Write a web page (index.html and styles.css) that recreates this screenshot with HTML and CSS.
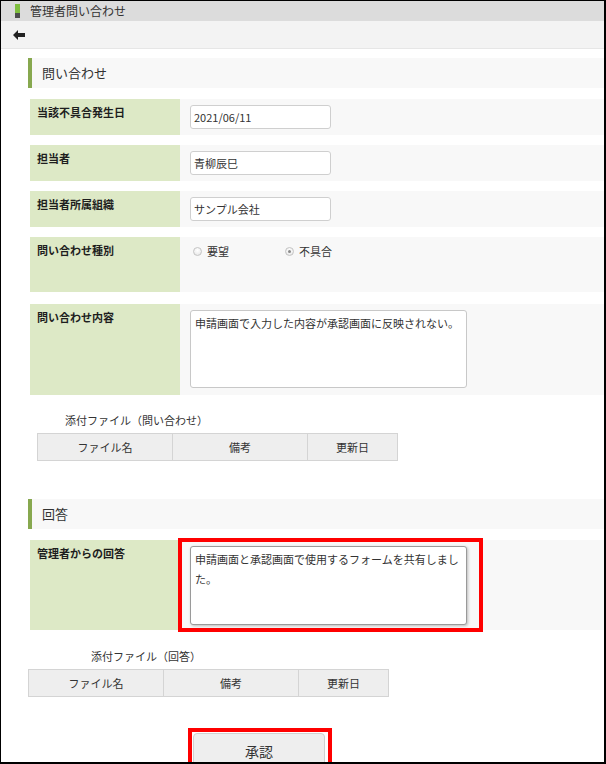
FILE: index.html
```html
<!DOCTYPE html>
<html lang="ja">
<head>
<meta charset="utf-8">
<title>管理者問い合わせ</title>
<link rel="stylesheet" href="styles.css">
</head>
<body>
<div class="frame">
  <div class="titlebar"><span class="marker"></span><span class="title">管理者問い合わせ</span></div>
  <div class="toolbar">
    <svg class="back" width="12" height="10" viewBox="0 0 12 10"><path d="M0 5 L5 0 L5 3 L12 3 L12 7 L5 7 L5 10 Z" fill="#222"/></svg>
  </div>
  <div class="content">
    <div class="section-head">問い合わせ</div>

    <div class="form-row r1">
      <div class="label">当該不具合発生日</div>
      <div class="value"><div class="input">2021/06/11</div></div>
    </div>
    <div class="form-row r1">
      <div class="label">担当者</div>
      <div class="value"><div class="input">青柳辰巳</div></div>
    </div>
    <div class="form-row r1">
      <div class="label">担当者所属組織</div>
      <div class="value"><div class="input">サンプル会社</div></div>
    </div>
    <div class="form-row r4">
      <div class="label">問い合わせ種別</div>
      <div class="value radios">
        <span class="radio-item w1"><span class="radio"></span>要望</span>
        <span class="radio-item"><span class="radio checked"></span>不具合</span>
      </div>
    </div>
    <div class="form-row r5">
      <div class="label">問い合わせ内容</div>
      <div class="value"><div class="textarea">申請画面で入力した内容が承認画面に反映されない。</div></div>
    </div>

    <div class="attach a1">
      <div class="attach-title">添付ファイル（問い合わせ）</div>
      <div class="file-table">
        <div class="c c1">ファイル名</div>
        <div class="c c2">備考</div>
        <div class="c c3">更新日</div>
      </div>
    </div>

    <div class="section-head s2">回答</div>
    <div class="form-row r6">
      <div class="label">管理者からの回答</div>
      <div class="value hl-wrap">
        <div class="textarea answer">申請画面と承認画面で使用するフォームを共有しました。</div>
        <span class="highlight hl-answer"></span>
      </div>
    </div>

    <div class="attach a2">
      <div class="attach-title">添付ファイル（回答）</div>
      <div class="file-table">
        <div class="c c1">ファイル名</div>
        <div class="c c2">備考</div>
        <div class="c c3">更新日</div>
      </div>
    </div>

    <div class="actions">
      <div class="btn-wrap">
        <div class="button">承認</div>
        <span class="highlight hl-btn"></span>
      </div>
    </div>
  </div>
</div>
</body>
</html>
```

FILE: styles.css
```css
* { box-sizing: border-box; }
html, body { margin: 0; padding: 0; background: #fff; }
body {
  font-family: "Noto Sans CJK JP", "Noto Sans", "Liberation Sans", sans-serif;
  color: #333;
}
.frame {
  width: 606px;
  height: 764px;
  border-top: 1px solid #000;
  border-left: 1px solid #000;
  border-right: 2px solid #000;
  border-bottom: 2px solid #000;
  overflow: hidden;
  background: #fff;
}
.titlebar {
  height: 20px;
  background: #dcdcdc;
  display: flex;
  align-items: center;
  padding-left: 14px;
}
.marker {
  width: 5px;
  height: 14px;
  background: linear-gradient(#7fbf3f 0 9px, #4e4e4e 9px 14px);
  margin-right: 10px;
}
.title {
  font-size: 12px;
  line-height: 16px;
  color: #333;
}
.toolbar {
  height: 28px;
  background: #f3f3f3;
  border-bottom: 1px solid #e6e6e6;
  display: flex;
  align-items: center;
  padding-left: 12px;
}
.back { display: block; }
.content {
  padding-left: 27px;
}
.section-head {
  margin-top: 9px;
  height: 30px;
  background: #f8f8f8;
  border-left: 4px solid #87a84f;
  padding-left: 10px;
  font-size: 13px;
  line-height: 30px;
  color: #333;
}
.section-head.s2 { margin-top: 38px; }
.form-row {
  margin-left: 2px;
  display: flex;
  margin-top: 10px;
}
.form-row.r1 { height: 36px; }
.section-head + .form-row { margin-top: 11px; }
.form-row.r4 { height: 55px; }
.form-row.r5 { height: 91px; margin-top: 12px; }
.form-row.r6 { height: 90px; margin-top: 11px; }
.label {
  width: 150px;
  background: #dde9c6;
  padding: 5px 0 0 7px;
  font-size: 11px;
  font-weight: bold;
  line-height: 16px;
  color: #1e1e1e;
}
.value {
  flex: 1;
  background: #f8f8f8;
  padding: 6px 0 0 10px;
}
.input {
  width: 141px;
  height: 24px;
  background: #fff;
  border: 1px solid #cfcfcf;
  border-radius: 3px;
  font-size: 11px;
  line-height: 22px;
  padding-left: 3px;
  color: #333;
}
.radios {
  padding-top: 6px;
  display: flex;
  align-items: flex-start;
  font-size: 11px;
  line-height: 16px;
  color: #333;
}
.radio-item {
  display: inline-flex;
  align-items: center;
}
.radio-item.w1 { width: 92px; }
.radio {
  width: 9px;
  height: 9px;
  border-radius: 50%;
  border: 1px solid #c4c4c4;
  background: radial-gradient(circle at 50% 35%, #fff, #e4e4e4);
  margin-left: 3px;
  margin-right: 5px;
  position: relative;
}
.radio.checked::after {
  content: "";
  position: absolute;
  left: 2px;
  top: 2px;
  width: 3px;
  height: 3px;
  border-radius: 50%;
  background: #8a8a8a;
}
.textarea {
  width: 277px;
  height: 78px;
  background: #fff;
  border: 1px solid #c8c8c8;
  border-radius: 3px;
  padding: 2px 4px 0 4px;
  font-size: 11px;
  line-height: 20px;
  color: #333;
}
.textarea.answer {
  height: 79px;
  border-color: #9a9a9a;
  box-shadow: 1px 1px 3px rgba(0,0,0,0.25);
}
.hl-wrap { position: relative; }
.highlight {
  position: absolute;
  border: 4px solid #ff0000;
  pointer-events: none;
}
.hl-answer {
  left: -2px;
  top: -2px;
  width: 305px;
  height: 94px;
}
.attach.a1 { margin-top: 17px; }
.attach.a2 { margin-top: 18px; }
.attach-title {
  font-size: 11px;
  line-height: 16px;
  height: 16px;
  color: #333;
  margin-bottom: 5px;
}
.a1 .attach-title { padding-left: 37px; }
.a2 .attach-title { padding-left: 63px; }
.file-table {
  display: flex;
  width: 361px;
  height: 28px;
  border: 1px solid #d4d4d4;
  background: #eeeeee;
}
.a1 .file-table { margin-left: 9px; }
.c {
  font-size: 11px;
  line-height: 26px;
  text-align: center;
  color: #333;
}
.c1 { width: 135px; border-right: 1px solid #d4d4d4; }
.c2 { width: 135px; border-right: 1px solid #d4d4d4; }
.c3 { flex: 1; }
.actions {
  margin-top: 36px;
  padding-left: 165px;
}
.btn-wrap {
  position: relative;
  width: 132px;
}
.button {
  width: 132px;
  height: 40px;
  background: #eeeeee;
  border: 1px solid #d0d0d0;
  border-radius: 4px;
  font-size: 14px;
  line-height: 34px;
  text-align: center;
  color: #333;
}
.hl-btn {
  left: -5px;
  top: -5px;
  width: 144px;
  height: 50px;
}
```
